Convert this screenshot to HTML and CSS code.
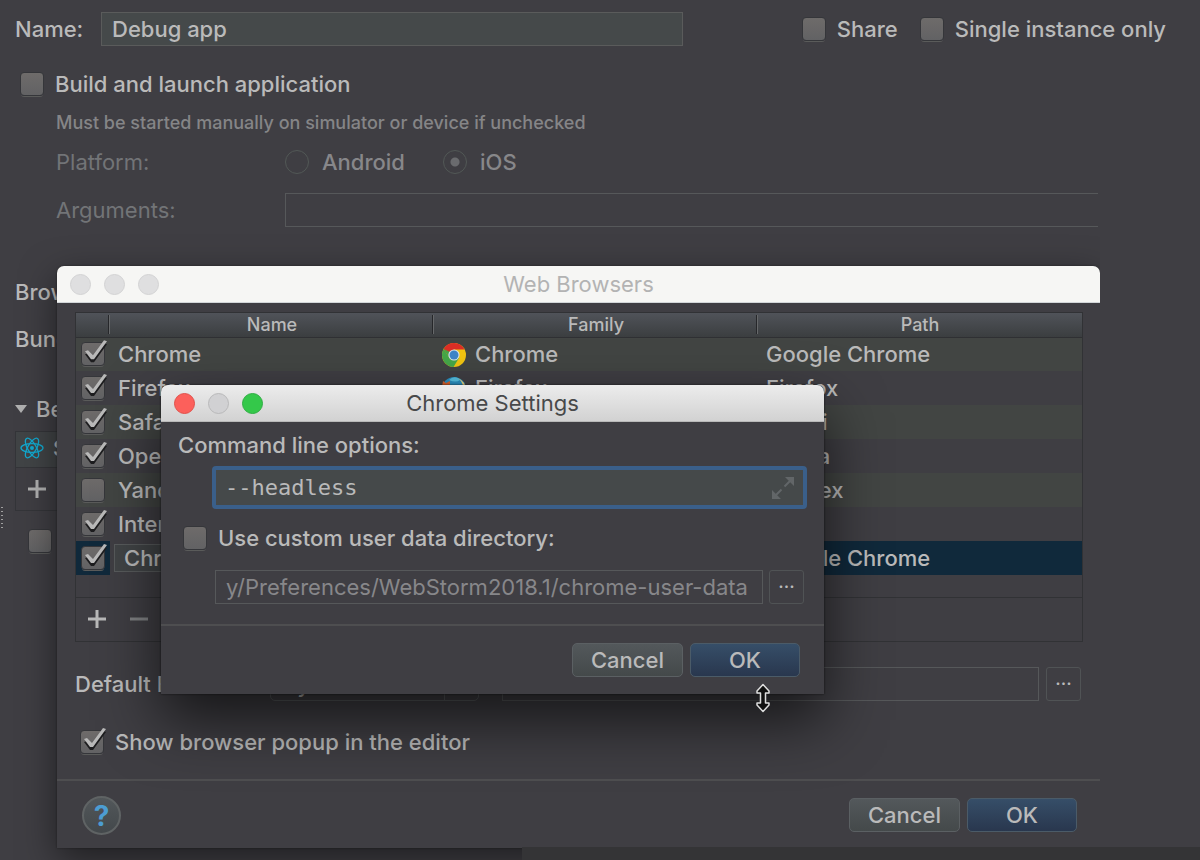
FILE: index.html
```html
<!DOCTYPE html>
<html lang="en">
<head>
<meta charset="utf-8">
<title>Debug app</title>
<link rel="stylesheet" href="styles.css">
</head>
<body>
<svg class="defs" width="0" height="0" aria-hidden="true">
  <symbol id="chrome" viewBox="0 0 24 24">
    <circle cx="12" cy="12" r="12" fill="#f2c511"/>
    <path d="M1.6 6A12 12 0 0 0 11.500 24L17 15 12 12 7 14z" fill="#45a849"/>
    <path d="M1.6 6A12 12 0 0 1 22.600 6.500H12L6 12z" fill="#dd2f26"/>
    <path d="M1.6 6 7 14 8 9z" fill="#45a849"/>
    <circle cx="12" cy="12" r="5.600" fill="#dfe7ec"/>
    <circle cx="12" cy="12" r="4.500" fill="#3f86c9"/>
  </symbol>
  <symbol id="firefox" viewBox="0 0 24 24">
    <circle cx="12" cy="12" r="12" fill="#2a8ec0"/>
    <path d="M7 3Q14 6 18 3L16 1Q11-1 7 3z" fill="#55bfe0"/>
    <path d="M1 4 4 6 8 4 8 9Q14 10 15 16L23 8A12 12 0 1 1 0 10z" fill="#d9602a"/>
    <path d="M16 1Q24 5 24 13L21 9Q20 4 16 1z" fill="#f0d37a"/>
  </symbol>
</svg>

<main class="config">
  <div class="row name-row">
    <label class="name-label" for="name">Name:</label>
    <input class="field name-field" id="name" type="text" value="Debug app">
    <div class="options">
      <label class="check"><input type="checkbox">Share</label>
      <label class="check"><input type="checkbox">Single instance only</label>
    </div>
  </div>
  <label class="check build"><input type="checkbox">Build and launch application</label>
  <p class="hint">Must be started manually on simulator or device if unchecked</p>
  <div class="row indent platform">
    <span class="caption">Platform:</span>
    <label class="radio"><input type="radio" name="platform" disabled>Android</label>
    <label class="radio"><input type="radio" name="platform" checked disabled>iOS</label>
  </div>
  <div class="row indent arguments">
    <label class="caption" for="args">Arguments:</label>
    <input class="field args-field" id="args" type="text" disabled>
  </div>
  <p class="side-label">Browser:</p>
  <p class="side-label">Bundler host:</p>
  <p class="side-label before"><svg width="12" height="8" viewBox="0 0 12 8" aria-hidden="true"><path d="M0 0H12L6 8z" fill="#b0b0b0"/></svg>Before launch</p>
  <section class="tasks">
    <div class="task">
      <svg width="24" height="24" viewBox="0 0 24 24" fill="none" stroke="#12a9cf" stroke-width="1.300" aria-hidden="true">
        <ellipse cx="12" cy="12" rx="11" ry="4.300"/>
        <ellipse cx="12" cy="12" rx="11" ry="4.300" transform="rotate(60 12 12)"/>
        <ellipse cx="12" cy="12" rx="11" ry="4.300" transform="rotate(120 12 12)"/>
        <circle cx="12" cy="12" r="2" fill="#12a9cf" stroke="none"/>
      </svg>
      <span>Start</span>
    </div>
    <div class="tools"><button class="tool" type="button" aria-label="Add task"><svg width="18" height="18" viewBox="0 0 18 18"><path d="M9 0V18M0 9H18" stroke="#b0b0b0" stroke-width="3"/></svg></button></div>
  </section>
  <input class="show-page" type="checkbox" aria-label="Show this page">
  <div class="grip"></div>
  <div class="bottom-strip"></div>
</main>

<section class="window browsers">
  <header class="title inactive">
    <div class="lights"><i></i><i></i><i></i></div>
    <h2>Web Browsers</h2>
  </header>
  <div class="browsers-body">
    <div class="list">
      <table>
        <colgroup><col class="tick-col"><col><col><col></colgroup>
        <thead><tr><th></th><th>Name</th><th>Family</th><th>Path</th></tr></thead>
        <tbody>
          <tr><td><input type="checkbox" aria-label="Chrome" checked></td><td>Chrome</td><td><svg class="logo"><use href="#chrome"/></svg>Chrome</td><td>Google Chrome</td></tr>
          <tr><td><input type="checkbox" aria-label="Firefox" checked></td><td>Firefox</td><td><svg class="logo"><use href="#firefox"/></svg>Firefox</td><td>Firefox</td></tr>
          <tr><td><input type="checkbox" aria-label="Safari" checked></td><td>Safari</td><td></td><td>Safari</td></tr>
          <tr><td><input type="checkbox" aria-label="Opera" checked></td><td>Opera</td><td></td><td>Opera</td></tr>
          <tr><td><input type="checkbox" aria-label="Yandex"></td><td>Yandex</td><td></td><td>Yandex</td></tr>
          <tr><td><input type="checkbox" aria-label="Internet Explorer" checked></td><td>Internet</td><td></td><td></td></tr>
          <tr class="selected"><td><input type="checkbox" aria-label="Chrome headless" checked></td><td class="editing"><input class="cell-editor" type="text" aria-label="Browser name" value="Chrome"></td><td></td><td>Google Chrome</td></tr>
        </tbody>
      </table>
      <div class="list-tools">
        <button class="tool" type="button" aria-label="Add"><svg width="18" height="18" viewBox="0 0 18 18"><path d="M9 0V18M0 9H18" stroke="#b8b8b8" stroke-width="3"/></svg></button>
        <button class="tool" type="button" aria-label="Remove"><svg width="18" height="18" viewBox="0 0 18 18"><path d="M0 9H18" stroke="#808284" stroke-width="3"/></svg></button>
      </div>
    </div>
    <div class="row default-row">
      <label class="default-label" for="default">Default Browser:</label>
      <select class="default-select" id="default"><option>System default</option></select>
      <input class="field default-path" type="text" aria-label="Browser path" disabled>
      <button class="more" type="button" aria-label="Browse">···</button>
    </div>
    <label class="check popup"><input type="checkbox" checked>Show browser popup in the editor</label>
  </div>
  <footer class="browsers-footer">
    <button class="help" type="button">?</button>
    <button class="button" type="button">Cancel</button>
    <button class="button primary" type="button">OK</button>
  </footer>
</section>

<section class="window settings">
  <header class="title">
    <div class="lights"><i class="close"></i><i></i><i class="zoom"></i></div>
    <h2>Chrome Settings</h2>
  </header>
  <div class="settings-body">
    <label class="options-label" for="cmd">Command line options:</label>
    <div class="cmd">
      <input class="cmd-input" id="cmd" type="text" value="--headless">
      <svg width="22" height="22" viewBox="0 0 22 22" aria-hidden="true"><path d="M13 0H22V9zM0 13V22H9z" fill="#626668"/><path d="M19 3 12.500 9.500M3 19 9.500 12.500" stroke="#626668" stroke-width="2"/></svg>
    </div>
    <label class="check custom"><input type="checkbox">Use custom user data directory:</label>
    <div class="row dir-row">
      <input class="field dir-field" type="text" aria-label="User data directory" value="y/Preferences/WebStorm2018.1/chrome-user-data" disabled>
      <button class="more" type="button" aria-label="Choose directory">···</button>
    </div>
  </div>
  <footer class="settings-footer">
    <button class="button" type="button">Cancel</button>
    <button class="button primary" type="button">OK</button>
  </footer>
</section>

<svg class="cursor" width="16" height="30" viewBox="0 0 16 30" aria-hidden="true"><path d="M8 1.500 14 8V10H10.500V20H14V22L8 28.500 2 22V20H5.500V10H2V8z" fill="#111" stroke="#ddd" stroke-width="1.500" stroke-linejoin="round"/></svg>
</body>
</html>
```
FILE: styles.css
```css
* { box-sizing: border-box; }

body {
  position: relative;
  margin: 0;
  min-height: 100vh;
  overflow: hidden;
  background: #3f3e43;
  color: #bababa;
  font: 500 22px/26px Inter, "Liberation Sans", sans-serif;
}

p, h2 { margin: 0; }
svg { display: block; flex: none; }
.defs { position: absolute; }
input, button, select { margin: 0; color: inherit; font: inherit; }
button { padding: 0; border: 0; background: none; }
.row { display: flex; align-items: center; }

/* Form controls */

.field {
  height: 34px;
  padding: 0 10px;
  border: 1px solid #5a5b5b;
  border-radius: 0;
  background: #45494a;
}

.field:disabled { background: transparent; color: #87878a; border-color: #56585a; font-weight: 400; }

.check { display: flex; align-items: center; gap: 11px; }

input[type="checkbox"] {
  position: relative;
  flex: none;
  width: 24px;
  height: 24px;
  appearance: none;
  border: 1px solid #35363a;
  border-radius: 4px;
  background: linear-gradient(#6e6b6a, #626264);
  box-shadow: 0 2px 0 -1px #5a5b5a;
}

input[type="checkbox"]:checked::before,
input[type="checkbox"]:checked::after {
  content: "";
  position: absolute;
  left: 2px;
  top: -3px;
  width: 23px;
  height: 20px;
  background: #b9b9b9;
  clip-path: polygon(1px 11px, 4px 10px, 9px 15px, 20px 0, 23px 1px, 10px 19px, 7px 19px);
}

input[type="checkbox"]:checked::before { top: 0; background: #1d1d1f; }

.radio { display: flex; align-items: center; gap: 13px; color: #87878a; }

.radio input {
  width: 24px;
  height: 24px;
  appearance: none;
  border: 1px solid #525856;
  border-radius: 50%;
}

.radio input:checked { background: radial-gradient(circle, #6a6b6e 4px, transparent 5px); }

.button {
  width: 111px;
  height: 34px;
  border: 1px solid #5b6063;
  border-radius: 5px;
  background: linear-gradient(#53585b, #44494a);
}

.primary { width: 110px; border-color: #4b5b68; background: linear-gradient(#364e68, #29374e); }

.more {
  width: 35px;
  height: 34px;
  border: 1px solid #505355;
  border-radius: 3px;
  font-size: 18px;
}

.tool { display: grid; place-items: center; width: 42px; height: 42px; }

/* Run configuration form */

.config { padding-top: 12px; }
.name-row { padding-left: 15px; padding-right: 34px; }
.name-label { width: 86px; }
.name-field { width: 582px; }
.options { display: flex; gap: 22px; margin-left: auto; white-space: nowrap; }
.build { margin: 25px 0 0 20px; }
.hint { margin: 13px 0 0 56px; font-size: 18px; line-height: 26px; color: #858587; }
.indent { padding-left: 56px; color: #727477; }
.caption { width: 229px; font-weight: 400; }
.platform { margin-top: 13px; }
.platform .radio { width: 158px; }
.arguments { margin: 18px 102px 0 0; }
.args-field { flex: 1; border-right: 0; }
.side-label { margin-left: 15px; margin-bottom: 21px; white-space: nowrap; }
.arguments + .side-label { margin-top: 52px; }
.before { display: flex; align-items: center; gap: 9px; margin-top: 44px; margin-bottom: 9px; }
.tasks { width: 400px; margin-left: 15px; border: 1px solid #343539; }
.task { display: flex; align-items: center; gap: 9px; height: 36px; padding: 0 0 4px 4px; border-bottom: 1px solid #343539; background: #414446; }
.show-page { display: block; margin: 18px 0 0 28px; }

.grip {
  position: absolute;
  left: 1px;
  top: 507px;
  width: 2px;
  height: 22px;
  background: repeating-linear-gradient(#a0a0a0 0 1px, transparent 1px 4px);
}

.bottom-strip { position: absolute; z-index: 1; left: 522px; right: 0; bottom: 0; height: 13px; background: #343436; }

/* Windows */

.window { position: absolute; border-radius: 8px 8px 0 0; background: #3f3e43; }

.title {
  position: relative;
  display: grid;
  place-items: center;
  height: 37px;
  border-bottom: 1px solid #b9b9b9;
  border-radius: 7px 7px 0 0;
  background: linear-gradient(#ececec, #d2d2d2);
  color: #48494a;
}

.title h2 { font-size: 22px; font-weight: 400; }
.title.inactive { background: #f6f6f4; border-bottom-color: #d2d6d8; color: #b3b3b3; }
.lights { position: absolute; left: 13px; top: 8px; display: flex; gap: 13px; }
.lights i { width: 21px; height: 21px; border: 1px solid #b9b9ba; border-radius: 50%; background: #d1d1d3; }
.inactive .lights i { border-color: #d3d3d4; background: #dfdfe0; }
.lights .close { border-color: #e1504a; background: #fc605b; }
.lights .zoom { border-color: #2fae43; background: #34c84a; }

.browsers {
  left: 57px;
  right: 100px;
  top: 266px;
  box-shadow: 0 12px 36px rgba(0, 0, 0, .5), 0 0 2px #222;
  clip-path: inset(-60px 0 -60px -60px);
}

.browsers-body { padding: 9px 17px 24px 18px; }
.list { border: 1px solid #313235; }

table { width: 100%; table-layout: fixed; border-collapse: collapse; }
.tick-col { width: 34px; }

th {
  height: 24px;
  padding: 0;
  border-bottom: 1px solid #2f3033;
  background:
    linear-gradient(#26272a, #26272a) right 1px top 2px / 1px 19px no-repeat,
    linear-gradient(#66686a, #66686a) right 0 top 2px / 1px 19px no-repeat,
    linear-gradient(#505359, #3b3e40);
  font-size: 18px;
  font-weight: 500;
  line-height: 23px;
}

th:last-child { background: linear-gradient(#505359, #3b3e40); }
td { height: 34px; padding: 0 0 0 8px; white-space: nowrap; overflow: hidden; }
td:first-child { padding-left: 5px; overflow: visible; }
td input { display: block; }
tbody tr:nth-child(odd) { background: #424543; }
tbody tr.selected { background: #10293b; }
.logo { display: inline-block; width: 24px; height: 24px; margin-right: 9px; vertical-align: -5px; }
td.editing { padding: 0 4px; background: #3f3e43; }
.cell-editor { width: 100%; height: 28px; padding: 0 9px; border: 1px solid #585b5c; background: #414446; }
.list-tools { display: flex; height: 44px; margin-top: 22px; border-top: 1px solid #313235; }

.default-row { margin-top: 25px; padding-right: 2px; }
.default-label { width: 195px; white-space: nowrap; }
.default-path { flex: 1; margin: 0 7px 0 23px; }

.default-select {
  width: 209px;
  height: 34px;
  padding: 0 12px;
  appearance: none;
  border: 1px solid #56595b;
  border-radius: 5px;
  background: linear-gradient(#56595b, #56595b) right 33px top / 1px 100% no-repeat;
}

.popup { margin: 28px 0 0 5px; }

.browsers-footer {
  display: flex;
  gap: 7px;
  padding: 17px 23px 13px 25px;
  border-top: 2px solid #4e4e50;
}

.help {
  width: 39px;
  height: 39px;
  margin: -2px auto 0 0;
  border: 2px solid #5f6364;
  border-radius: 50%;
  background: linear-gradient(#52575a, #43484b);
  color: #4c9dd2;
  font-size: 28px;
  font-weight: 700;
}

.settings {
  left: 161px;
  top: 385px;
  width: 663px;
  box-shadow: 0 26px 60px rgba(0, 0, 0, .65), 0 0 2px #111;
}

.settings-body { padding: 10px 17px 20px; }
.options-label { display: block; }

.cmd {
  display: flex;
  align-items: center;
  height: 43px;
  margin: 8px 0 0 34px;
  padding: 0 9px;
  border: 4px solid #3a5f8a;
  border-radius: 4px;
  background: #45494a;
}

.cmd-input {
  flex: 1;
  padding: 0;
  border: 0;
  outline: 0;
  background: none;
  font-family: "DejaVu Sans Mono", monospace;
}

.custom { margin: 16px 0 0 5px; }
.dir-row { gap: 6px; margin: 19px 3px 0 37px; }
.dir-field { flex: 1; min-width: 0; }

.settings-footer {
  display: flex;
  justify-content: flex-end;
  gap: 7px;
  padding: 17px 24px;
  border-top: 2px solid #4e4e50;
}

.cursor { position: absolute; left: 755px; top: 683px; }
```
